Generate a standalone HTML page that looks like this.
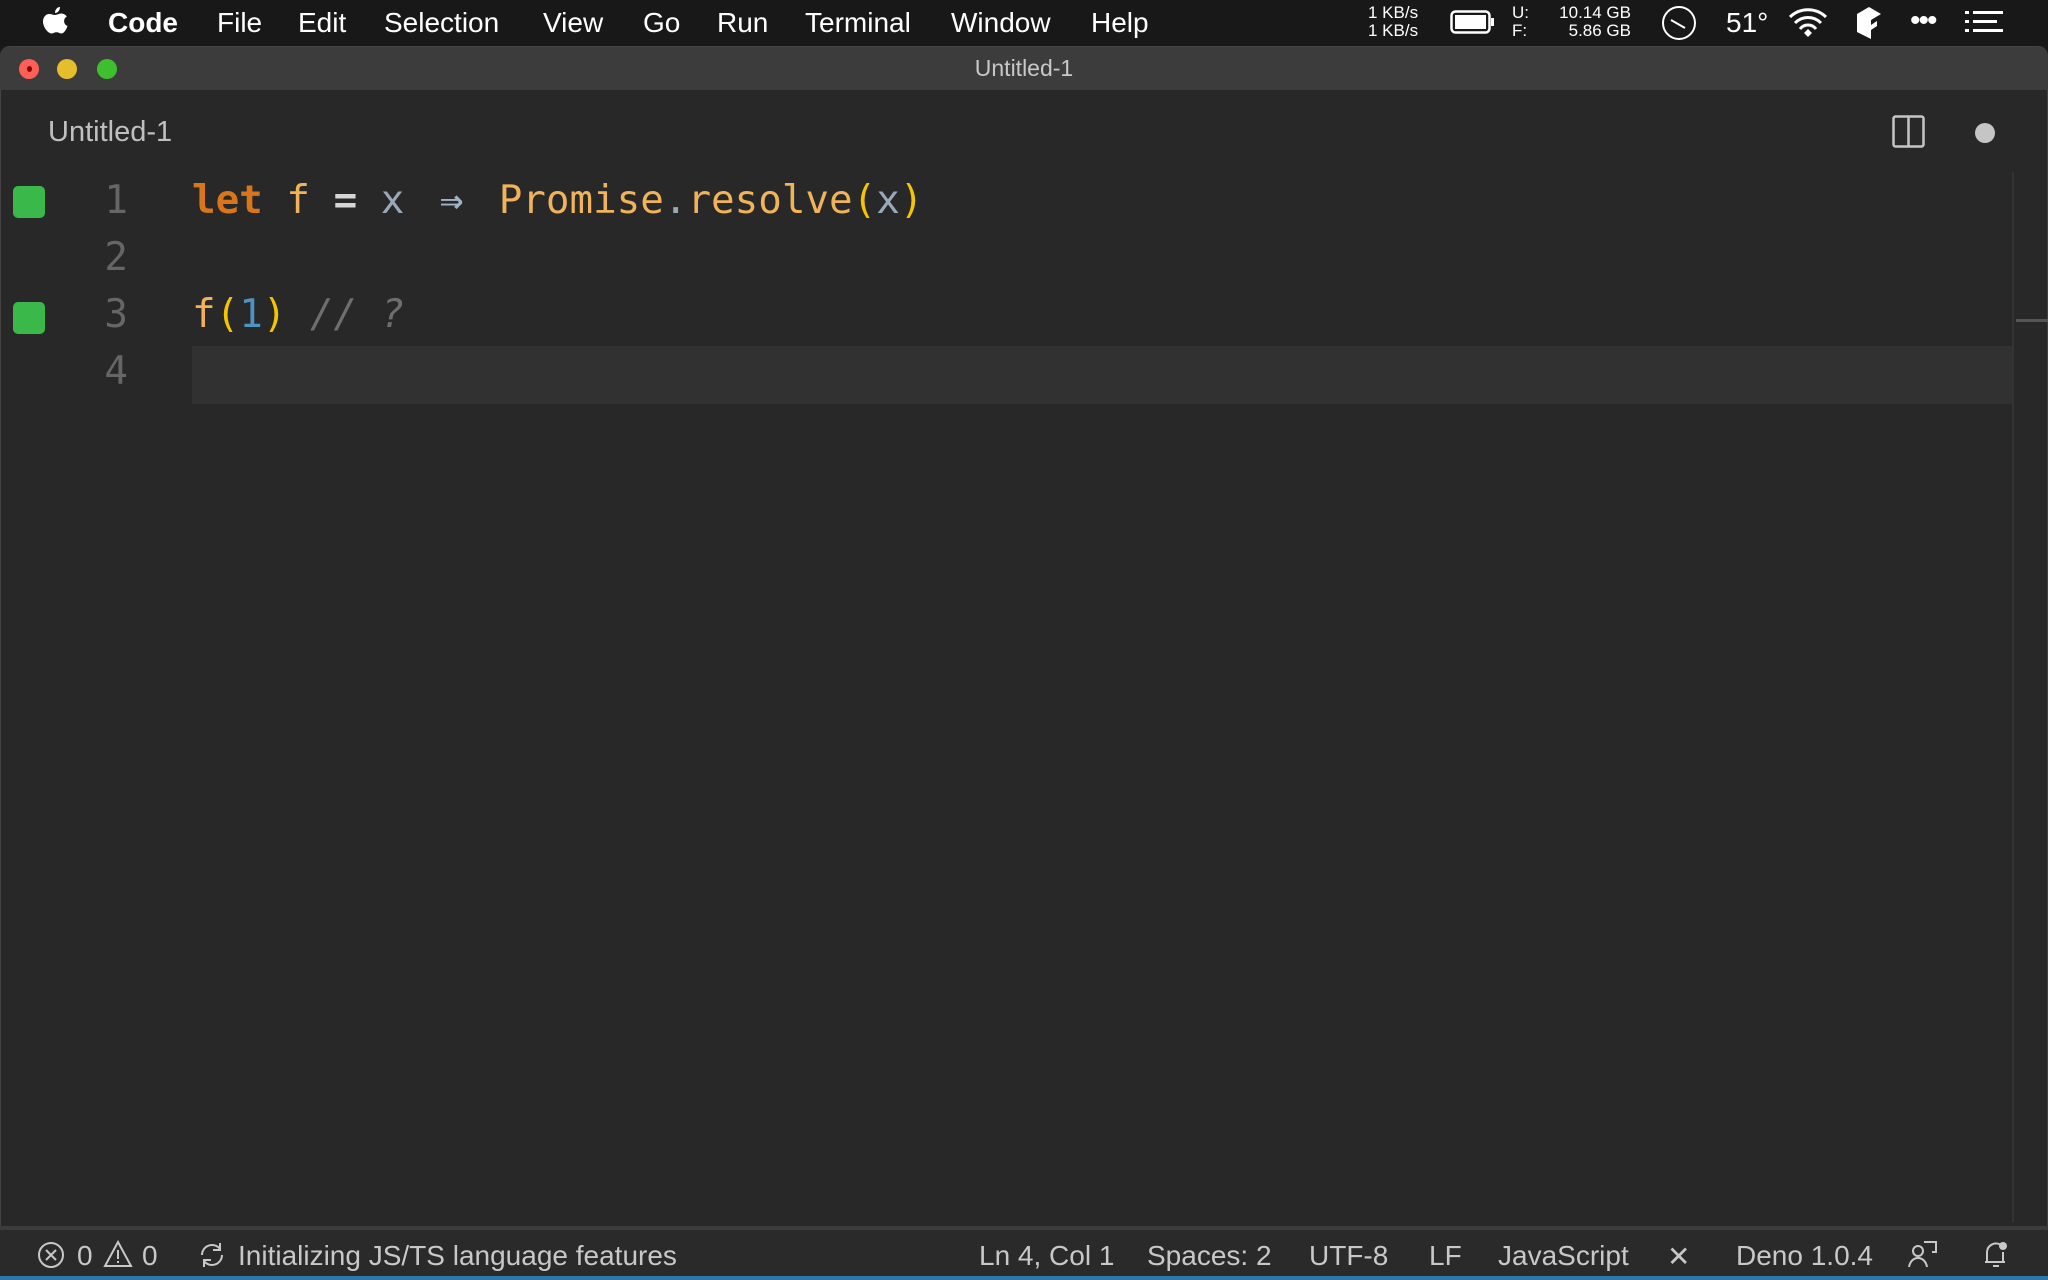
<!DOCTYPE html>
<html><head><meta charset="utf-8"><style>
*{margin:0;padding:0;box-sizing:border-box}
body{width:2048px;height:1280px;background:#1a1a1a;position:relative;overflow:hidden;font-family:"Liberation Sans",sans-serif}
.a{position:absolute;white-space:nowrap}
.menu{top:0;left:0;width:2048px;height:46px;background:#181818}
.mi{top:7px;font-size:28px;color:#fff}
.win{top:46px;left:0;width:2048px;height:1234px;background:#282828;border-radius:10px 10px 0 0;overflow:hidden;border:1px solid #444}
.title{top:47px;left:0;width:2048px;height:43px;background:#3c3c3c}
.code{font-family:"DejaVu Sans Mono","Liberation Mono",monospace;font-size:39.2px;line-height:57px}
.ln{color:#666;width:60px;text-align:right;left:68px}
.sb{top:1240px;font-size:28px;color:#c8c8c8}
.ar{display:inline-block;width:2ch;text-align:center;color:#9fb2c6;font-weight:bold}
</style></head><body>
<div class="a menu"></div>
<svg class="a" style="left:40px;top:5px" width="30" height="34" viewBox="0 0 30 34"><path fill="#fff" d="M20 2c0 3-2 6-5 6 0-3 2-6 5-6zM15 10c2 0 4-1.5 6-1.5 2.5 0 4.5 1.2 5.8 3-4 2.3-3.3 8 .7 9.5-1 3-3.3 7.5-6 7.5-2 0-2.6-1.2-5-1.2s-3 1.2-5 1.2C8 28.5 3 22 3 16.5 3 12 6 9 9.2 9c2.3 0 3.8 1 5.8 1z"/></svg>
<div class="a mi" style="left:108px;font-weight:bold">Code</div>
<div class="a mi" style="left:217px">File</div>
<div class="a mi" style="left:298px">Edit</div>
<div class="a mi" style="left:384px">Selection</div>
<div class="a mi" style="left:543px">View</div>
<div class="a mi" style="left:643px">Go</div>
<div class="a mi" style="left:717px">Run</div>
<div class="a mi" style="left:805px">Terminal</div>
<div class="a mi" style="left:951px">Window</div>
<div class="a mi" style="left:1091px">Help</div>
<div class="a" style="left:1368px;top:4px;font-size:17px;line-height:18px;color:#fff">1 KB/s<br>1 KB/s</div>
<svg class="a" style="left:1450px;top:10px" width="46" height="26"><rect x="1.5" y="1.5" width="38" height="21" rx="4" fill="none" stroke="#fff" stroke-width="2.5"/><rect x="5" y="5" width="31" height="14" fill="#fff"/><rect x="41" y="8" width="3" height="8" fill="#fff"/></svg>
<div class="a" style="left:1512px;top:4px;font-size:17px;line-height:18px;color:#fff">U:<br>F:</div>
<div class="a" style="left:1545px;top:4px;width:86px;text-align:right;font-size:17px;line-height:18px;color:#fff">10.14 GB<br>5.86 GB</div>
<svg class="a" style="left:1660px;top:4px" width="38" height="38"><circle cx="19" cy="19" r="16" fill="none" stroke="#fff" stroke-width="2"/><line x1="11" y1="16" x2="25" y2="24" stroke="#fff" stroke-width="2"/></svg>
<div class="a mi" style="left:1726px;color:#fff">51°</div>
<svg class="a" style="left:1787px;top:6px" width="42" height="32" viewBox="0 0 42 32"><path d="M3 11a26 26 0 0 1 36 0M8 17a18 18 0 0 1 26 0M13 23a10 10 0 0 1 16 0" fill="none" stroke="#fff" stroke-width="3"/><path d="M17 27l4-4 4 4-4 4z" fill="#fff"/></svg>
<svg class="a" style="left:1855px;top:6px" width="30" height="34"><path d="M2 8l12-7 12 7-10 6v5l6-4v5l-6 4v9L2 26z" fill="#fff"/></svg>
<div class="a" style="left:1910px;top:4px;font-size:30px;color:#fff;letter-spacing:-2px">•••</div>
<svg class="a" style="left:1965px;top:11px" width="38" height="22"><g fill="#fff"><rect x="0" y="0" width="4" height="3"/><rect x="8" y="0" width="30" height="3"/><rect x="0" y="9" width="4" height="3"/><rect x="8" y="9" width="24" height="3"/><rect x="0" y="18" width="4" height="3"/><rect x="8" y="18" width="30" height="3"/></g></svg>

<div class="a win"></div>
<div class="a title" style="border-radius:10px 10px 0 0"></div>
<div class="a" style="left:19px;top:59px;width:20px;height:20px;border-radius:50%;background:#fe5f57"></div>
<div class="a" style="left:27px;top:66px;width:5px;height:6px;border-radius:50%;background:#8a0000"></div>
<div class="a" style="left:57px;top:59px;width:20px;height:20px;border-radius:50%;background:#e6bd2b"></div>
<div class="a" style="left:97px;top:59px;width:20px;height:20px;border-radius:50%;background:#3fbf2e"></div>
<div class="a" style="left:0;top:55px;width:2048px;text-align:center;font-size:23px;color:#c8c8c8">Untitled-1</div>
<div class="a" style="left:48px;top:116px;font-size:29px;color:#c0c0c0">Untitled-1</div>
<svg class="a" style="left:1892px;top:115px" width="34" height="34"><rect x="1.5" y="1.5" width="30" height="30" rx="2" fill="none" stroke="#c5c5c5" stroke-width="2.5"/><line x1="16.5" y1="2" x2="16.5" y2="32" stroke="#c5c5c5" stroke-width="2.5"/></svg>
<div class="a" style="left:1975px;top:123px;width:20px;height:20px;border-radius:50%;background:#c5c5c5"></div>

<div class="a" style="left:192px;top:346px;width:1820px;height:58px;background:#313131"></div>
<div class="a" style="left:2012px;top:172px;width:2px;height:1050px;background:#333"></div>
<div class="a" style="left:2016px;top:319px;width:32px;height:3px;background:#555"></div>
<div class="a" style="left:13px;top:186px;width:32px;height:32px;border-radius:5px;background:#3bb84a"></div>
<div class="a" style="left:13px;top:302px;width:32px;height:32px;border-radius:5px;background:#3bb84a"></div>
<div class="a code ln" style="top:172px">1</div>
<div class="a code ln" style="top:229px">2</div>
<div class="a code ln" style="top:286px">3</div>
<div class="a code ln" style="top:343px">4</div>
<div class="a code" style="left:192px;top:172px;color:#f0b35a"><b style="color:#d9761c">let</b> f <b style="color:#d6d6d6">=</b> <span style="color:#9aa9ba">x</span> <span class="ar">⇒</span> Promise<span style="color:#9aa9ba">.</span>resolve<span style="color:#f5c400">(</span><span style="color:#9aa9ba">x</span><span style="color:#f5c400">)</span></div>
<div class="a code" style="left:192px;top:286px;color:#f0b35a">f<span style="color:#f5c400">(</span><span style="color:#4f92c4">1</span><span style="color:#f5c400">)</span> <span style="color:#6e6e6e;font-style:italic">// ?</span></div>

<div class="a" style="left:0;top:1226px;width:2048px;height:4px;background:#3c3c3c"></div>
<div class="a" style="left:0;top:1230px;width:2048px;height:46px;background:#2a2a2a"></div>
<div class="a" style="left:0;top:1276px;width:2048px;height:4px;background:#2c78a8"></div>
<svg class="a" style="left:37px;top:1241px" width="28" height="28"><circle cx="14" cy="14" r="12" fill="none" stroke="#c8c8c8" stroke-width="2"/><path d="M9 9l10 10M19 9L9 19" stroke="#c8c8c8" stroke-width="2"/></svg>
<div class="a sb" style="left:77px">0</div>
<svg class="a" style="left:103px;top:1240px" width="30" height="28"><path d="M15 2L28 26H2z" fill="none" stroke="#c8c8c8" stroke-width="2"/><path d="M15 10v9M15 21v2" stroke="#c8c8c8" stroke-width="2"/></svg>
<div class="a sb" style="left:142px">0</div>
<svg class="a" style="left:197px;top:1241px" width="30" height="28"><path d="M5 14a10 10 0 0 1 18-6M25 14a10 10 0 0 1-18 6" fill="none" stroke="#c8c8c8" stroke-width="2"/><path d="M23 2v7h-7M7 26v-7h7" fill="none" stroke="#c8c8c8" stroke-width="2"/></svg>
<div class="a sb" style="left:238px">Initializing JS/TS language features</div>
<div class="a sb" style="left:979px">Ln 4, Col 1</div>
<div class="a sb" style="left:1147px">Spaces: 2</div>
<div class="a sb" style="left:1309px">UTF-8</div>
<div class="a sb" style="left:1429px">LF</div>
<div class="a sb" style="left:1498px">JavaScript</div>
<div class="a sb" style="left:1667px">✕</div>
<div class="a sb" style="left:1736px">Deno 1.0.4</div>
<svg class="a" style="left:1907px;top:1239px" width="32" height="32"><circle cx="11" cy="12" r="5" fill="none" stroke="#c8c8c8" stroke-width="2"/><path d="M2 28c1-6 5-9 9-9s8 3 9 9M17 3h12v10h-4" fill="none" stroke="#c8c8c8" stroke-width="2"/></svg>
<svg class="a" style="left:1981px;top:1238px" width="30" height="32"><path d="M6 24V14a9 9 0 0 1 14-7M4 24h20M12 28h6" fill="none" stroke="#c8c8c8" stroke-width="2"/><circle cx="22" cy="8" r="4" fill="#c8c8c8"/><path d="M22 14v10" stroke="#c8c8c8" stroke-width="2"/></svg>
</body></html>
